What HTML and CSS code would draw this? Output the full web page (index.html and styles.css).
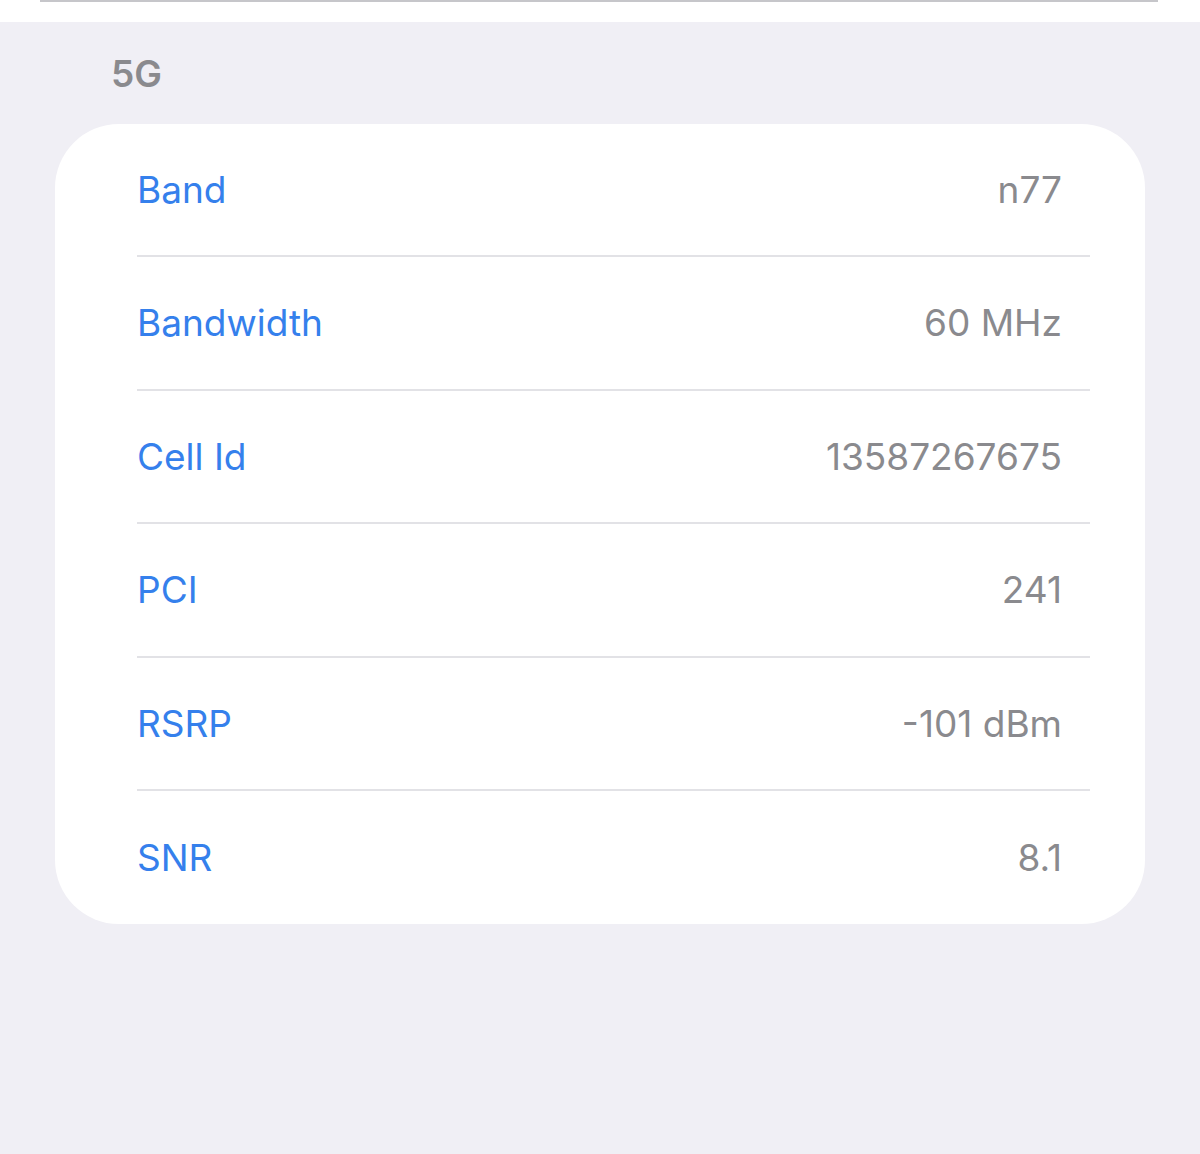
FILE: index.html
```html
<!DOCTYPE html>
<html lang="en">
<head>
  <meta charset="UTF-8" />
  <meta name="viewport" content="width=device-width, initial-scale=1.0" />
  <title>5G</title>
  <link rel="stylesheet" href="styles.css">
</head>
<body>
  <div class="top-strip">
    <div class="top-line"></div>
  </div>

  <div class="section">
    <h2 class="section-title">5G</h2>
    <div class="card">
      <div class="row">
        <span class="label">Band</span>
        <span class="value">n77</span>
      </div>
      <div class="row">
        <span class="label">Bandwidth</span>
        <span class="value">60 MHz</span>
      </div>
      <div class="row">
        <span class="label">Cell Id</span>
        <span class="value">13587267675</span>
      </div>
      <div class="row">
        <span class="label">PCI</span>
        <span class="value">241</span>
      </div>
      <div class="row">
        <span class="label">RSRP</span>
        <span class="value">-101 dBm</span>
      </div>
      <div class="row">
        <span class="label">SNR</span>
        <span class="value">8.1</span>
      </div>
    </div>
  </div>
</body>
</html>
```

FILE: styles.css
```css
body {
  font-family: Inter, "Noto Sans", sans-serif;
  background-color: #f0eff5;
  margin: 0;
  min-height: 100vh;
}
.top-strip {
  background: white;
  height: 22px;
  padding: 0 42px 0 40px;
}
.top-line {
  height: 2px;
  background: #c6c6ca;
}
.section {
  padding: 0 55px;
}
.section-title {
  margin: 0;
  padding: 32px 0 0 56px;
  height: 102px;
  box-sizing: border-box;
  font-size: 37px;
  font-weight: 600;
  color: #8a8a8e;
  line-height: 40px;
}
.card {
  background: white;
  border-radius: 64px;
  padding-left: 82px;
}
.row {
  display: flex;
  justify-content: space-between;
  align-items: center;
  height: 131.5px;
  margin-right: 55px;
  padding-right: 28px;
  border-bottom: 2px solid #e2e2e6;
  font-size: 37px;
}
.row:first-child {
  height: 131px;
}
.row:last-child {
  border-bottom: none;
  height: 133px;
}
.label {
  color: #3580ec;
}
.value {
  color: #8a8a8e;
}
```
